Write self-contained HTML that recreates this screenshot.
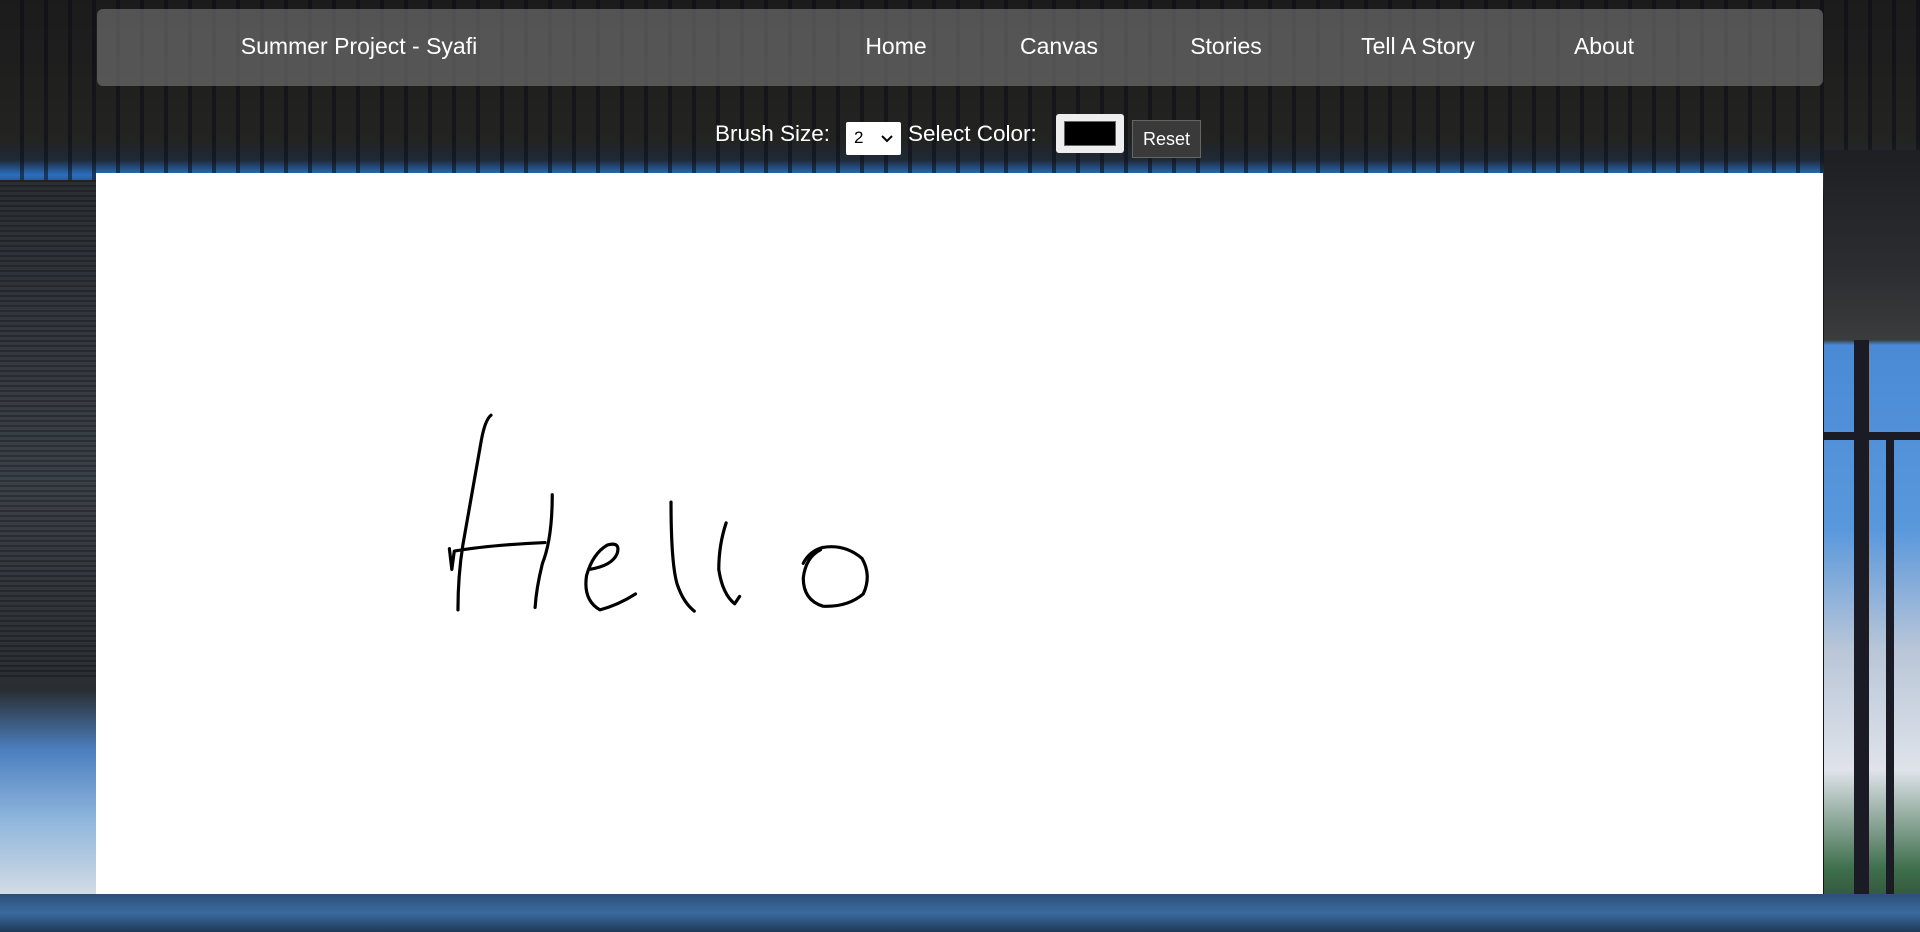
<!DOCTYPE html>
<html><head><meta charset="utf-8"><style>
html,body{margin:0;padding:0;width:1920px;height:932px;overflow:hidden;font-family:"Liberation Sans",sans-serif;}
body{position:relative;background:#141416;}
.bg{position:absolute;inset:0;
background:
repeating-linear-gradient(90deg,rgba(0,0,0,0) 0 20px,rgba(10,12,20,.55) 20px 24px),
linear-gradient(180deg,#1b1b1c 0,#232321 140px,#1f2a38 160px,#2a6fc0 175px,#1b1b1d 200px,#1c1c1e 100%);}
.left{position:absolute;left:0;top:180px;width:96px;height:752px;
background:linear-gradient(180deg,#2a2e33 0,#3b4148 300px,#2a2d31 510px,#4c7fbf 570px,#8fb6dc 640px,#d8dee6 720px,#4c82c4 752px);}
.left:after{content:"";position:absolute;inset:0;background:repeating-linear-gradient(180deg,rgba(0,0,0,.25) 0 2px,transparent 2px 5px);height:500px;}
.right{position:absolute;left:1824px;top:150px;width:96px;height:782px;
background:linear-gradient(180deg,#1d1f22 0,#2b2d30 120px,#3a3c3e 190px,#4a8ad6 195px,#5a98dc 380px,#b9c6d8 500px,#dfe3ea 620px,#3d6e4a 720px,#2b3b2e 782px);}
.right i{position:absolute;background:#1b1b26;}
.bottom{position:absolute;left:0;top:894px;width:1920px;height:38px;background:linear-gradient(180deg,#2d4f78,#3a6aa0 50%,#1f3a58);}
.nav{position:absolute;left:97px;top:9px;width:1726px;height:77px;border-radius:6px;background:rgba(120,120,120,.62);color:#fff;font-size:23px;}
.nav span{position:absolute;top:0;line-height:75px;transform:translateX(-50%);white-space:nowrap;}
.ctrl{position:absolute;top:116px;color:#fff;font-size:22.5px;line-height:36px;}
.sel{position:absolute;left:846px;top:122px;width:55px;height:33px;background:#fff;border-radius:2px;font-size:17px;color:#000;}
.sel b{position:absolute;left:8px;top:6px;font-weight:normal;}
.col{position:absolute;left:1056px;top:114px;width:68px;height:39px;background:#eee;border-radius:3px;box-sizing:border-box;padding:7px 8px;}
.col div{width:100%;height:100%;background:#000;border:1px solid #666;box-sizing:border-box;}
.reset{position:absolute;left:1132px;top:120px;width:69px;height:38px;background:#3a3a3a;border:1px solid #666;box-sizing:border-box;color:#fff;font-size:18px;text-align:center;line-height:36px;}
.canvas{position:absolute;left:96px;top:173px;width:1727px;height:721px;background:#fff;}
svg{position:absolute;left:0;top:0;}
</style></head><body>
<div class="bg"></div>
<div class="left"></div>
<div class="right"><i style="left:0;top:282px;width:96px;height:8px"></i><i style="left:62px;top:290px;width:8px;height:500px"></i><i style="left:30px;top:190px;width:15px;height:600px"></i></div>
<div class="bottom"></div>
<div class="nav">
<span style="left:262px">Summer Project - Syafi</span>
<span style="left:799px">Home</span>
<span style="left:962px">Canvas</span>
<span style="left:1129px">Stories</span>
<span style="left:1321px">Tell A Story</span>
<span style="left:1507px">About</span>
</div>
<div class="ctrl" style="left:715px">Brush Size:</div>
<div class="sel"><b>2</b><svg width="55" height="33" viewBox="0 0 55 33"><path d="M36 14 l5 5 l5 -5" stroke="#000" stroke-width="2" fill="none"/></svg></div>
<div class="ctrl" style="left:908px">Select Color:</div>
<div class="col"><div></div></div>
<div class="reset">Reset</div>
<div class="canvas"></div>
<svg width="1920" height="932" viewBox="0 0 1568 761" fill="none" stroke="#000" stroke-width="2.6" stroke-linecap="round" stroke-linejoin="round">
<path d="M401 339 Q396 343 393 360 Q384 410 378 445 Q374 470 374 498"/>
<path d="M367 448 L369 465 L371 450 Q400 445 445 443"/>
<path d="M451 404 Q451 440 443 460 Q438 480 437 496"/>
<path d="M481 465 Q500 462 504 452 Q507 442 496 445 Q484 452 479 470 Q476 490 490 498 Q505 494 519 485"/>
<path d="M548 410 Q548 460 553 477 Q558 492 567 499"/>
<path d="M593 427 Q587 445 587 465 Q590 485 600 493 L604 487"/>
<path d="M670 449 Q658 455 656 472 Q656 490 672 495 Q692 496 705 485 Q712 470 704 456 Q690 444 672 447 Q661 450 656 460"/>
</svg>
</body></html>
